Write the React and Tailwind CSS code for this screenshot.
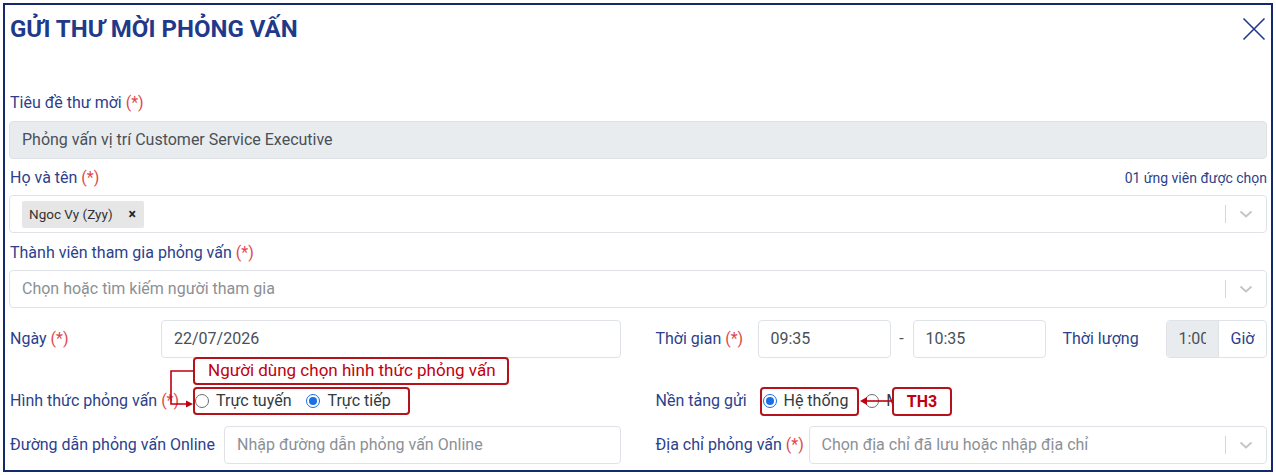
const Label = ({ children, required, className = '' }) => (
  <div className={`text-[16px] leading-5 text-[#2c3f8c] ${className}`}>
    {children}
    {required && <span className="text-[#e0474c]"> (*)</span>}
  </div>
);

const Chevron = () => (
  <div className="flex items-center gap-[13px] pr-[13px]">
    <span className="block h-[18px] w-px bg-[#d6d6d6]" />
    <svg width="14" height="8" viewBox="0 0 14 8" fill="none">
      <path d="M1.5 1.5l5.5 5 5.5-5" stroke="#c4c4c4" strokeWidth="1.8" />
    </svg>
  </div>
);

const Input = ({ value, placeholder, className = '' }) => (
  <div className={`flex h-[38px] items-center rounded-[4px] border border-[#dfe3e8] bg-white px-3 text-[16px] ${className}`}>
    {value ? <span className="text-[#495057]">{value}</span> : <span className="text-[#8b9096]">{placeholder}</span>}
  </div>
);

const Radio = ({ checked, label }) => (
  <label className="flex items-center gap-[7px] text-[16px] text-[#343a40]">
    {checked ? (
      <span className="flex h-[14px] w-[14px] items-center justify-center rounded-full border-[1.5px] border-[#1a6ee6] bg-white">
        <span className="h-[8px] w-[8px] rounded-full bg-[#1a6ee6]" />
      </span>
    ) : (
      <span className="h-[14px] w-[14px] rounded-full border border-[#6b6f75] bg-white" />
    )}
    {label}
  </label>
);

export default function App() {
  return (
    <div className="relative h-[475px] w-[1276px] bg-white p-[3px] font-['Roboto','Liberation_Sans',sans-serif]">
      <div className="h-full border-2 border-[#14286c] px-[4px]">
        {/* header */}
        <div className="mt-[10px] flex h-[28px] items-center justify-between pl-[1px]">
          <h1 className="text-[24px] font-bold leading-[28px] text-[#1f3a8a]">GỬI THƯ MỜI PHỎNG VẤN</h1>
          <svg width="24" height="24" viewBox="0 0 24 24" fill="none" className="mr-[1px]">
            <path d="M1.5 1.5l21 21M22.5 1.5l-21 21" stroke="#1f3a8a" strokeWidth="1.6" />
          </svg>
        </div>

        <Label required className="mt-[50px] pl-[1px]">Tiêu đề thư mời</Label>
        <div className="mt-[8px] flex h-[38px] items-center rounded-[4px] border border-[#dfe3e8] bg-[#e9ecef] px-3 text-[16px] text-[#495057]">
          Phỏng vấn vị trí Customer Service Executive
        </div>

        <div className="mt-[9px] flex items-end justify-between pl-[1px]">
          <Label required>Họ và tên</Label>
          <span className="text-[14px] leading-5 text-[#2c3f8c]">01 ứng viên được chọn</span>
        </div>
        <div className="mt-[7px] flex h-[38px] items-center justify-between rounded-[4px] border border-[#dfe3e8] bg-white pl-3">
          <span className="flex h-[27px] items-center gap-[16px] rounded-[2px] bg-[#e6e6e6] pl-[7px] pr-[8px] text-[13.5px] text-[#333]">
            Ngoc Vy (Zyy)
            <span className="text-[14px] font-bold leading-none text-[#222]">×</span>
          </span>
          <Chevron />
        </div>

        <Label required className="mt-[10px] pl-[1px]">Thành viên tham gia phỏng vấn</Label>
        <div className="mt-[7px] flex h-[38px] items-center justify-between rounded-[4px] border border-[#dfe3e8] bg-white pl-3 text-[16px] text-[#8b9096]">
          Chọn hoặc tìm kiếm người tham gia
          <Chevron />
        </div>

        <div className="mt-[12px] grid grid-cols-2 gap-x-[35px]">
          {/* date */}
          <div className="flex items-center">
            <Label required className="w-[152px] shrink-0 pl-[1px]">Ngày</Label>
            <Input value="22/07/2026" className="flex-1" />
          </div>
          <div className="flex items-center">
            <Label required className="w-[102px] shrink-0">Thời gian</Label>
            <Input value="09:35" className="w-[133px]" />
            <span className="w-[22px] text-center text-[16px] text-[#495057]">-</span>
            <Input value="10:35" className="w-[133px]" />
            <Label className="ml-[17px] w-[103px] shrink-0">Thời lượng</Label>
            <div className="flex h-[38px] flex-1 overflow-hidden rounded-[4px] border border-[#dfe3e8] text-[16px]">
              <div className="flex w-[52px] items-center overflow-hidden whitespace-nowrap border-r border-[#dfe3e8] bg-[#e9ecef] pl-3 pr-[10px] text-[#495057]">
                <span className="block w-[27px] overflow-hidden">1:00</span>
              </div>
              <div className="flex flex-1 items-center pl-3 text-[#2c3f8c]">Giờ</div>
            </div>
          </div>

          {/* interview type / sending platform */}
          <div className="mt-[30px] flex h-[26px] items-center">
            <Label required className="w-[186px] shrink-0 pl-[1px]">Hình thức phỏng vấn</Label>
            <div className="flex items-center gap-[15px]">
              <Radio label="Trực tuyến" />
              <Radio checked label="Trực tiếp" />
            </div>
          </div>
          <div className="mt-[30px] flex h-[26px] items-center">
            <Label className="w-[107px] shrink-0">Nền tảng gửi</Label>
            <div className="flex items-center gap-[17px]">
              <Radio checked label="Hệ thống" />
              <Radio label="Mail" />
            </div>
          </div>

          {/* online link / address */}
          <div className="mt-[12px] flex items-center">
            <Label className="w-[215px] shrink-0 pl-[1px]">Đường dẫn phỏng vấn Online</Label>
            <Input placeholder="Nhập đường dẫn phỏng vấn Online" className="flex-1" />
          </div>
          <div className="mt-[12px] flex items-center">
            <Label required className="w-[153px] shrink-0">Địa chỉ phỏng vấn</Label>
            <div className="flex h-[38px] flex-1 items-center justify-between rounded-[4px] border border-[#dfe3e8] bg-white pl-3 text-[16px] text-[#8b9096]">
              Chọn địa chỉ đã lưu hoặc nhập địa chỉ
              <Chevron />
            </div>
          </div>
        </div>
      </div>

      {/* callouts */}
      <div className="absolute left-[193px] top-[357px] flex h-[28px] w-[316px] items-center rounded-[4px] border-2 border-[#b5121b] bg-white pl-[13px] text-[17px] text-[#c00010]">
        Người dùng chọn hình thức phỏng vấn
      </div>
      <div className="absolute left-[193px] top-[387px] h-[28px] w-[217px] rounded-[4px] border-2 border-[#b5121b]" />
      <svg className="absolute left-[164px] top-[366px]" width="32" height="44" viewBox="0 0 32 44" fill="none">
        <path d="M30 5H7V38H24" stroke="#c00010" strokeWidth="1.6" />
        <path d="M22 34.5L29 38L22 41.5Z" fill="#c00010" />
      </svg>

      <div className="absolute left-[760px] top-[387px] h-[29px] w-[99px] rounded-[4px] border-2 border-[#b5121b]" />
      <svg className="absolute left-[858px] top-[394px]" width="36" height="14" viewBox="0 0 36 14" fill="none">
        <path d="M35 7H7" stroke="#c00010" strokeWidth="1.6" />
        <path d="M9 3L2 7L9 11Z" fill="#c00010" />
      </svg>
      <div className="absolute left-[892px] top-[387px] flex h-[29px] w-[60px] items-center justify-center rounded-[4px] border-2 border-[#b5121b] bg-white text-[16px] font-bold text-[#c00010]">
        TH3
      </div>
    </div>
  );
}
